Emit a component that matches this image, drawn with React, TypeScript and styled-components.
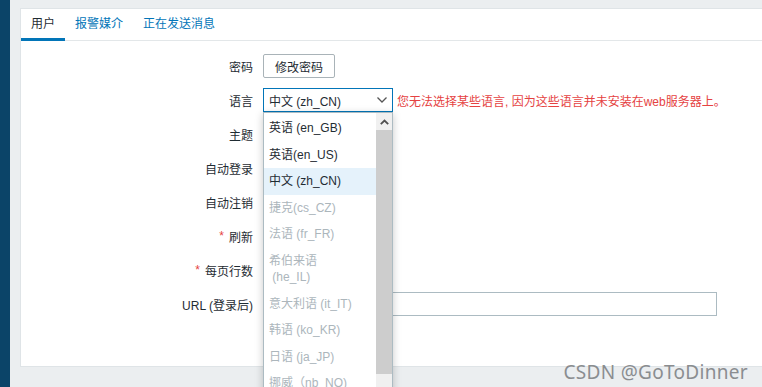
import React from 'react'
import styled, { createGlobalStyle } from 'styled-components'

const colors = {
  sidebar: '#0b4468',
  page: '#ebeef0',
  text: '#1f2c33',
  link: '#0275b8',
  red: '#e54242',
  border: '#acbbc2',
  muted: '#acb6bc',
}

const GlobalStyle = createGlobalStyle`
  html, body {
    margin: 0;
    padding: 0;
    height: 387px;
    overflow: hidden;
    background: ${colors.page};
  }
  body {
    font-family: "Liberation Sans", "Noto Sans CJK SC", sans-serif;
    font-size: 12px;
    color: ${colors.text};
  }
`

const Layout = styled.div`
  display: flex;
  height: 387px;
  overflow: hidden;
`
const Sidebar = styled.div`
  width: 10px;
  flex: none;
  background: ${colors.sidebar};
`
const Main = styled.div`
  flex: 1;
  padding: 8px 0 0 10px;
  position: relative;
  overflow: hidden;
`
const Card = styled.div`
  background: #fff;
  border: 1px solid #dfe4e7;
  border-right: 0;
  padding-bottom: 45px;
`
const TabBar = styled.div`
  display: flex;
  border-bottom: 1px solid #e3e7e9;
`
const Tab = styled.div<{ $active?: boolean }>`
  height: 27px;
  line-height: 27px;
  padding: 2px 10px 0;
  margin-bottom: -1px;
  border-bottom: 3px solid ${(p) => (p.$active ? colors.link : 'transparent')};
  color: ${(p) => (p.$active ? colors.text : colors.link)};
`
const Form = styled.div`
  display: grid;
  grid-template-columns: 232px 1fr;
  column-gap: 10px;
  grid-auto-rows: 34px;
  padding-top: 8px;
`
const Label = styled.div`
  display: flex;
  align-items: center;
  justify-content: flex-end;
`
const Star = styled.span`
  color: ${colors.red};
  margin-right: 5px;
`
const Field = styled.div`
  display: flex;
  align-items: center;
`
const Button = styled.div`
  box-sizing: border-box;
  height: 24px;
  width: 72px;
  border: 1px solid #a9b3b8;
  border-radius: 2px;
  display: flex;
  align-items: center;
  justify-content: center;
  background: #fff;
`
const SelectWrap = styled.div`
  position: relative;
  width: 130px;
`
const Select = styled.div`
  box-sizing: border-box;
  height: 24px;
  border: 1px solid ${colors.link};
  padding: 0 4px 0 5px;
  display: flex;
  align-items: center;
  justify-content: space-between;
`
const Warning = styled.span`
  color: ${colors.red};
  margin-left: 4px;
  white-space: nowrap;
`
const Dropdown = styled.div`
  position: absolute;
  top: 100%;
  left: 0;
  width: 130px;
  height: 300px;
  box-sizing: border-box;
  border: 1px solid ${colors.border};
  background: #fff;
  box-shadow: 0 2px 8px rgba(0, 0, 0, 0.22);
  display: flex;
  z-index: 5;
`
const List = styled.div`
  flex: 1;
  padding-top: 2px;
`
const Option = styled.div<{ $disabled?: boolean; $selected?: boolean }>`
  padding: 5px 5px;
  line-height: 16.5px;
  color: ${(p) => (p.$disabled ? colors.muted : colors.text)};
  background: ${(p) => (p.$selected ? '#e5f2fb' : 'transparent')};
`
const Scrollbar = styled.div`
  width: 16px;
  flex: none;
  background: #f0f0f0;
  display: flex;
  flex-direction: column;
`
const ScrollArrow = styled.div`
  height: 17px;
  display: flex;
  align-items: center;
  justify-content: center;
`
const Thumb = styled.div`
  height: 244px;
  background: #cdcdcd;
`
const TextInput = styled.div`
  box-sizing: border-box;
  width: 454px;
  height: 24px;
  border: 1px solid ${colors.border};
  background: #fff;
`
const Watermark = styled.div`
  position: absolute;
  right: 14px;
  bottom: 2px;
  font-family: "Noto Sans", "Open Sans", sans-serif;
  font-size: 19px;
  color: #8a8d90;
  letter-spacing: 0.3px;
`

const Chevron = () => (
  <svg width="12" height="8" viewBox="0 0 12 8">
    <path d="M1.5 1.5 L6 6 L10.5 1.5" fill="none" stroke="#555" strokeWidth="1.3" />
  </svg>
)

const UpArrow = () => (
  <svg width="9" height="6" viewBox="0 0 9 6">
    <path d="M0.8 5.2 L4.5 1.5 L8.2 5.2" fill="none" stroke="#505050" strokeWidth="1.8" />
  </svg>
)

const languages = [
  { name: '英语 (en_GB)' },
  { name: '英语(en_US)' },
  { name: '中文 (zh_CN)', selected: true },
  { name: '捷克(cs_CZ)', disabled: true },
  { name: '法语 (fr_FR)', disabled: true },
  { name: '希伯来语\n\u00a0(he_IL)', disabled: true },
  { name: '意大利语 (it_IT)', disabled: true },
  { name: '韩语 (ko_KR)', disabled: true },
  { name: '日语 (ja_JP)', disabled: true },
  { name: '挪威（nb_NO)', disabled: true },
]

export default function App() {
  return (
    <>
      <GlobalStyle />
      <Layout>
        <Sidebar />
        <Main>
          <Card>
            <TabBar>
              <Tab $active>用户</Tab>
              <Tab>报警媒介</Tab>
              <Tab>正在发送消息</Tab>
            </TabBar>
            <Form>
              <Label>密码</Label>
              <Field>
                <Button>修改密码</Button>
              </Field>

              <Label>语言</Label>
              <Field>
                <SelectWrap>
                  <Select>
                    <span>中文 (zh_CN)</span>
                    <Chevron />
                  </Select>
                  <Dropdown>
                    <List>
                      {languages.map((l) => (
                        <Option key={l.name} $disabled={l.disabled} $selected={l.selected}>
                          {l.name.split('\n').map((line, i) => (
                            <div key={i}>{line}</div>
                          ))}
                        </Option>
                      ))}
                    </List>
                    <Scrollbar>
                      <ScrollArrow>
                        <UpArrow />
                      </ScrollArrow>
                      <Thumb />
                    </Scrollbar>
                  </Dropdown>
                </SelectWrap>
                <Warning>您无法选择某些语言, 因为这些语言并未安装在web服务器上。</Warning>
              </Field>

              <Label>主题</Label>
              <Field />

              <Label>自动登录</Label>
              <Field />

              <Label>自动注销</Label>
              <Field />

              <Label>
                <Star>*</Star>刷新
              </Label>
              <Field />

              <Label>
                <Star>*</Star>每页行数
              </Label>
              <Field />

              <Label>URL (登录后)</Label>
              <Field>
                <TextInput />
              </Field>
            </Form>
          </Card>
          <Watermark>CSDN @GoToDinner</Watermark>
        </Main>
      </Layout>
    </>
  )
}
